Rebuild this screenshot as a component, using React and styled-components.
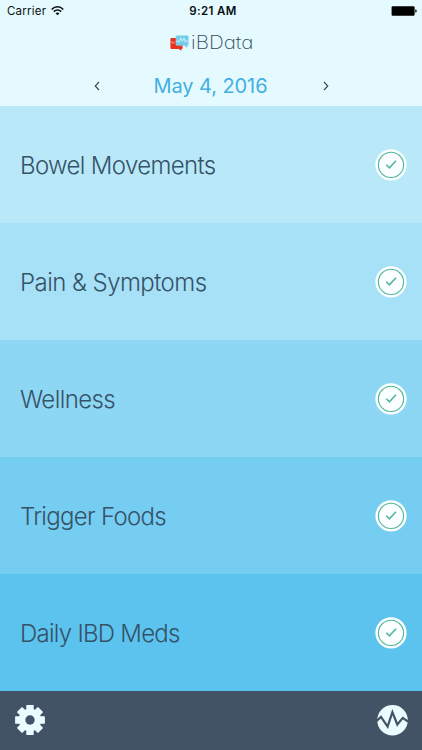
import React from "react";
import styled, { createGlobalStyle } from "styled-components";

const GlobalStyle = createGlobalStyle`
  * { box-sizing: border-box; }
  body { margin: 0; font-family: Inter, "Liberation Sans", sans-serif; }
  svg { display: block; }
`;

const Screen = styled.main`
  display: flex;
  flex-direction: column;
  width: 422px;
  height: 750px;
  overflow: hidden;
  background: #e4faff;
`;

const StatusBar = styled.div`
  display: grid;
  grid-template-columns: 1fr auto 1fr;
  align-items: center;
  height: 22px;
  padding: 0 5px 0 7px;
  color: #0b0f10;
`;

const Carrier = styled.div`
  display: flex;
  align-items: center;
  gap: 5px;
  font-size: 11.5px;
  letter-spacing: 0.22px;
`;

const Clock = styled.div`
  font-size: 11.5px;
  font-weight: 600;
  letter-spacing: 0.4px;
  margin-left: 2px;
`;

const Battery = styled.div`
  display: flex;
  justify-content: flex-end;
`;

const Brand = styled.header`
  display: flex;
  justify-content: center;
  align-items: center;
  gap: 2px;
  height: 42px;
`;

const BrandName = styled.span`
  width: 62px;
  font-size: 18px;
  line-height: 22px;
  font-weight: 200;
  letter-spacing: 0;
  font-feature-settings: "cv11";
  white-space: nowrap;
  transform: scaleX(1.145);
  transform-origin: left center;
  color: #344b5b;
`;

const DateNav = styled.nav`
  display: flex;
  justify-content: space-between;
  align-items: center;
  height: 42px;
  padding: 2px 91px 0 92px;
`;

const DateLabel = styled.span`
  margin-right: 2px;
  font-size: 20px;
  letter-spacing: -0.08px;
  color: #43afe1;
`;

const Arrow = styled.button`
  display: grid;
  place-items: center;
  width: 10px;
  height: 16px;
  padding: 0;
  border: 0;
  background: none;
  color: #39454c;
`;

const List = styled.ul`
  margin: 0;
  padding: 0;
  list-style: none;
`;

const Row = styled.li`
  display: flex;
  justify-content: space-between;
  align-items: center;
  height: 117px;
  padding: 0 15px 1px 20px;
  background: ${(p) => p.$tone};
`;

const RowLabel = styled.span`
  font-size: 24px;
  font-weight: 300;
  line-height: 30px;
  padding-top: 4px;
  letter-spacing: ${(p) => p.$tracking}px;
  color: #355268;
`;

const Toolbar = styled.footer`
  display: flex;
  flex: 1;
  justify-content: space-between;
  align-items: center;
  padding: 0 14px 2px;
  background: #415364;
`;

const ToolButton = styled.button`
  padding: 0;
  border: 0;
  background: none;
`;

const Wifi = () => (
  <svg width="13" height="10" viewBox="0 0 13 10" fill="none" stroke="#0b0f10" strokeWidth="1.6">
    <path d="M.7 3.5C4-.1 9-.1 12.3 3.5M2.8 5.6c2.1-2.2 5.3-2.2 7.4 0" />
    <path d="M6.5 9.3 4.5 7.2c1.1-1.1 2.9-1.1 4 0z" fill="#0b0f10" stroke="none" />
  </svg>
);

const BatteryIcon = () => (
  <svg width="26" height="10" viewBox="0 0 26 10">
    <rect x=".6" y=".2" width="23" height="9.6" rx="1.2" fill="#000" />
    <path d="M24.3 3.2q1.4.3 1.4 1.8t-1.4 1.8z" fill="#000" />
  </svg>
);

const BrandMark = () => (
  <svg width="19" height="16" viewBox="0 0 19 16">
    <path d="M1.4 3h5v7.2h6.2V13q0 1-1 1h-.4l.5 1.8-3.2-1.8H1.4q-1 0-1-1V4q0-1 1-1z" fill="#e8341e" />
    <path d="m.6 7.6 1.5-1 1.2 2L5 6.5" fill="none" stroke="#f7b3a9" strokeWidth=".8" />
    <path d="M6.7.5h10.8q1 0 1 1v8q0 1-1 1h-.4l.4 2.4-3.3-2.4H6.7q-1 0-1-1v-8q0-1 1-1z" fill="#75cbea" />
    <path d="m6.2 6.7 1.5-1 1.2 1.5L10.8 3l1.5 3.2L14 3.3l1.4 3.8 1.1-1.4 1.5.8" fill="none" stroke="#d7f5fd" strokeWidth=".9" />
  </svg>
);

const Chevron = ({ d }) => (
  <svg width="6" height="10" viewBox="0 0 6 10" fill="none" stroke="currentColor" strokeWidth="1.1">
    <path d={d} />
  </svg>
);

const CheckBadge = () => (
  <svg width="32" height="33" viewBox="0 0 32 33" fill="none" stroke="#52b69a">
    <circle cx="16" cy="16.9" r="15.6" fill="#fcffff" stroke="none" />
    <circle cx="16" cy="16.9" r="12.6" strokeWidth="1.1" />
    <path d="m11.3 16.8 3.1 3 6.6-7" strokeWidth="1.6" />
  </svg>
);

const Gear = () => (
  <svg width="32" height="32" viewBox="-16 -16 32 32" fill="#ecfbff">
    <circle r="11.3" />
    {[0, 45, 90, 135].map((a) => (
      <rect key={a} x="-3.7" y="-14.9" width="7.4" height="29.8" rx=".5" transform={`rotate(${a})`} />
    ))}
    <circle r="4.7" fill="#415364" />
  </svg>
);

const Pulse = () => (
  <svg width="32" height="32" viewBox="0 0 32 32">
    <circle cx="16.5" cy="16.2" r="15.3" fill="#ecfbff" />
    <path d="m0 17.5 5-4.6 6.6 9.6 4.8-14.4 4.9 12.4 5.5-6.6 5.2 3.8" fill="none" stroke="#415364" strokeWidth="2.2" />
  </svg>
);

const rows = [
  { label: "Bowel Movements", tone: "#b9e9f9", tracking: -0.65 },
  { label: "Pain & Symptoms", tone: "#a7e1f7", tracking: -0.56 },
  { label: "Wellness", tone: "#8ed7f4", tracking: -0.6 },
  { label: "Trigger Foods", tone: "#76cdf2", tracking: -0.7 },
  { label: "Daily IBD Meds", tone: "#5bc3ee", tracking: -0.74 },
];

export default function App() {
  return (
    <Screen>
      <GlobalStyle />
      <StatusBar>
        <Carrier>Carrier<Wifi /></Carrier>
        <Clock>9:21 AM</Clock>
        <Battery><BatteryIcon /></Battery>
      </StatusBar>
      <Brand>
        <BrandMark />
        <BrandName>iBData</BrandName>
      </Brand>
      <DateNav>
        <Arrow aria-label="Previous day"><Chevron d="M5 1 1.2 5 5 9" /></Arrow>
        <DateLabel>May 4, 2016</DateLabel>
        <Arrow aria-label="Next day"><Chevron d="m1 1 3.8 4L1 9" /></Arrow>
      </DateNav>
      <List>
        {rows.map((r) => (
          <Row key={r.label} $tone={r.tone}>
            <RowLabel $tracking={r.tracking}>{r.label}</RowLabel>
            <CheckBadge />
          </Row>
        ))}
      </List>
      <Toolbar>
        <ToolButton aria-label="Settings"><Gear /></ToolButton>
        <ToolButton aria-label="Trends"><Pulse /></ToolButton>
      </Toolbar>
    </Screen>
  );
}
